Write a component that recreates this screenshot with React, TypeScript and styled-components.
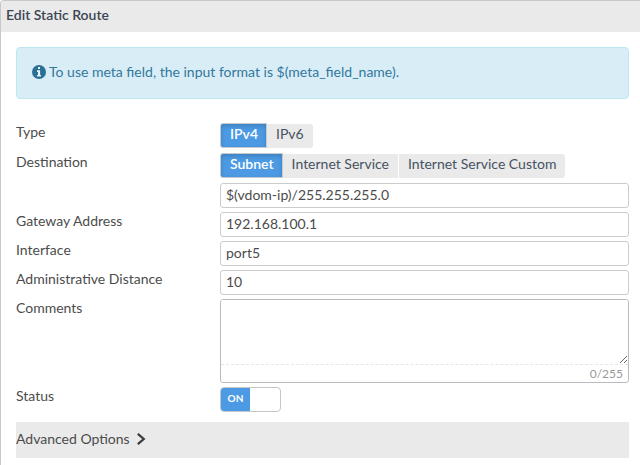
import React, { useState } from "react";
import styled, { createGlobalStyle, css } from "styled-components";

const GlobalStyle = createGlobalStyle`
  *, *::before, *::after { box-sizing: border-box; }
  html { height: 100%; }
  body {
    margin: 0;
    min-height: 100%;
    background: #fff;
    color: #4c4c4c;
    font: 14px/20px Lato, "Open Sans", sans-serif;
  }
  input, textarea, button { font: inherit; color: inherit; }
`;

const Dialog = styled.main`
  min-height: 100vh;
  border: solid #c8c8c8;
  border-width: 1px 0 0 1px;
  border-top-left-radius: 4px;
  overflow: hidden;
`;

const Title = styled.h1`
  margin: 0;
  padding: 4px 5px 7px;
  background: #eaeaea;
  color: #3c4653;
  font-size: 14px;
  line-height: 20px;
  font-weight: 600;
`;

const Body = styled.div`
  padding: 15px 11px 7px 15px;
`;

const Notice = styled.p`
  display: flex;
  align-items: center;
  gap: 3px;
  margin: 0 0 24px;
  padding: 14px 15px 16px;
  border: 1px solid #bce8f1;
  border-radius: 4px;
  background: #d9edf7;
  color: #31789b;
`;

const Form = styled.form`
  display: grid;
  gap: 4px;
`;

const Row = styled.div<{ $loose?: boolean }>`
  display: grid;
  grid-template-columns: 204px minmax(0, 1fr);
  align-items: start;
  margin-bottom: ${(p) => (p.$loose ? "1px" : "0")};
`;

const caption = css`
  line-height: 18px;
`;

const Label = styled.label`
  ${caption}
`;

const GroupLabel = styled.span`
  ${caption}
`;

const Fields = styled.div`
  display: grid;
  gap: 5px;
`;

const TextInput = styled.input`
  width: 100%;
  height: 25px;
  padding: 0 5px 3px;
  border: 1px solid #ccc;
  border-radius: 3px;
  background: #fff;
  outline: none;
`;

const Segments = styled.div`
  display: flex;
  align-items: flex-end;
  gap: 1px;
  height: 25px;
`;

const Segment = styled.button<{ $active: boolean }>`
  height: 24px;
  padding: 0 9px 4px;
  border: 0;
  background: #eaeaea;
  color: #475261;
  line-height: 20px;
  cursor: pointer;

  &:first-child { border-radius: 3px 0 0 3px; }
  &:last-child { border-radius: 0 3px 3px 0; }

  ${(p) =>
    p.$active &&
    css`
      height: 25px;
      margin-right: -1px;
      padding: 0 8px 4px 9px;
      border: 1px solid #c4cad0;
      background: #4b9ae3;
      box-shadow: inset 0 2px 4px rgba(0, 0, 0, 0.18);
      color: #fff;
      font-weight: 600;
    `}
`;

const CommentBox = styled.div`
  border: 1px solid #b9bcc0;
  border-radius: 3px;
  overflow: hidden;
`;

const CommentInput = styled.textarea`
  display: block;
  width: 100%;
  height: 64px;
  padding: 3px 5px;
  border: 0;
  outline: none;
  resize: vertical;
`;

const Counter = styled.div`
  padding: 0 5px;
  border-top: 1px dashed #e6e6e6;
  color: #999;
  font-size: 12px;
  line-height: 17px;
  text-align: right;
`;

const Toggle = styled.label`
  display: flex;
  justify-self: start;
  width: 61px;
  height: 25px;
  border: 1px solid #c4c6ca;
  border-radius: 4px;
  overflow: hidden;
  cursor: pointer;
`;

const ToggleInput = styled.input`
  position: absolute;
  opacity: 0;
  margin: 0;
`;

const ToggleState = styled.span<{ $on: boolean }>`
  width: 29px;
  margin-left: ${(p) => (p.$on ? "0" : "auto")};
  background: ${(p) => (p.$on ? "#4b9ae3" : "#aaa")};
  color: #fff;
  font-size: 10px;
  line-height: 21px;
  font-weight: 700;
  text-align: center;
`;

const Advanced = styled.button`
  display: flex;
  align-items: center;
  gap: 6px;
  width: 100%;
  height: 36px;
  margin-top: 10px;
  padding: 0 0 2px;
  border: 0;
  background: #eaeaea;
  cursor: pointer;
`;

const InfoIcon = () => (
  <svg width="14" height="14" viewBox="0 0 14 14" aria-hidden="true">
    <circle cx="7" cy="7" r="7" fill="#2b7094" />
    <path d="M6 2h2v2H6zM5 5.3h3.1v4.7H9v1.6H5V10h1V6.9H5z" fill="#e4f3fa" />
  </svg>
);

const Chevron = () => (
  <svg width="10" height="12" viewBox="0 0 10 12" aria-hidden="true">
    <path d="M1.8.8 7.8 6l-6 5.2" fill="none" stroke="#3c3c3c" strokeWidth="2.2" />
  </svg>
);

type ChoiceProps = { labelId: string; options: string[] };

function Choice({ labelId, options }: ChoiceProps) {
  const [selected, setSelected] = useState(options[0]);
  return (
    <Segments role="group" aria-labelledby={labelId}>
      {options.map((option) => (
        <Segment
          key={option}
          type="button"
          $active={option === selected}
          aria-pressed={option === selected}
          onClick={() => setSelected(option)}
        >
          {option}
        </Segment>
      ))}
    </Segments>
  );
}

type TextRowProps = { id: string; label: string; value: string };

function TextRow({ id, label, value }: TextRowProps) {
  return (
    <Row>
      <Label htmlFor={id}>{label}</Label>
      <TextInput id={id} defaultValue={value} />
    </Row>
  );
}

export default function App() {
  const [comments, setComments] = useState("");
  const [enabled, setEnabled] = useState(true);

  return (
    <>
      <GlobalStyle />
      <Dialog>
        <Title>Edit Static Route</Title>
        <Body>
          <Notice>
            <InfoIcon />
            To use meta field, the input format is $(meta_field_name).
          </Notice>
          <Form onSubmit={(e) => e.preventDefault()}>
            <Row $loose>
              <GroupLabel id="type-label">Type</GroupLabel>
              <Choice labelId="type-label" options={["IPv4", "IPv6"]} />
            </Row>
            <Row>
              <GroupLabel id="destination-label">Destination</GroupLabel>
              <Fields>
                <Choice
                  labelId="destination-label"
                  options={["Subnet", "Internet Service", "Internet Service Custom"]}
                />
                <TextInput
                  aria-labelledby="destination-label"
                  defaultValue="$(vdom-ip)/255.255.255.0"
                />
              </Fields>
            </Row>
            <TextRow id="gateway" label="Gateway Address" value="192.168.100.1" />
            <TextRow id="interface" label="Interface" value="port5" />
            <TextRow id="distance" label="Administrative Distance" value="10" />
            <Row>
              <Label htmlFor="comments">Comments</Label>
              <CommentBox>
                <CommentInput
                  id="comments"
                  maxLength={255}
                  value={comments}
                  onChange={(e) => setComments(e.target.value)}
                />
                <Counter>{comments.length}/255</Counter>
              </CommentBox>
            </Row>
            <Row>
              <Label htmlFor="status">Status</Label>
              <Toggle>
                <ToggleInput
                  id="status"
                  type="checkbox"
                  role="switch"
                  checked={enabled}
                  onChange={(e) => setEnabled(e.target.checked)}
                />
                <ToggleState $on={enabled}>{enabled ? "ON" : "OFF"}</ToggleState>
              </Toggle>
            </Row>
          </Form>
          <Advanced type="button" aria-expanded="false">
            Advanced Options
            <Chevron />
          </Advanced>
        </Body>
      </Dialog>
    </>
  );
}
